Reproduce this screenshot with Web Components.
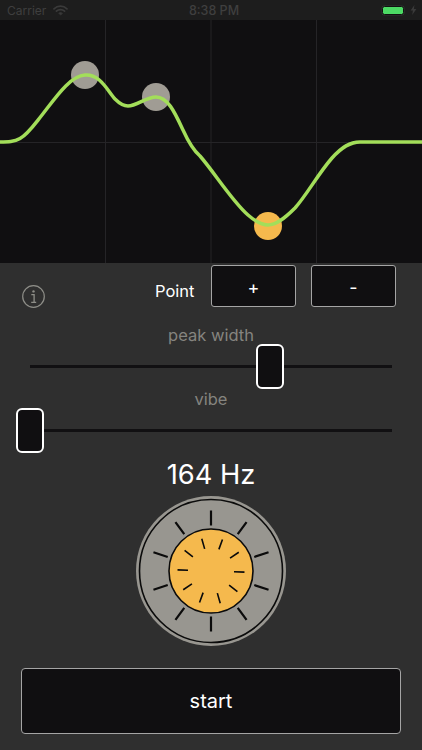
<!DOCTYPE html>
<html lang="en">
<head>
<meta charset="utf-8">
<title>Tone generator</title>
<style>
  html, body { margin: 0; padding: 0; background: #2f2f2f; }
  body { width: 422px; height: 750px; overflow: hidden; font-family: Inter, "Liberation Sans", sans-serif; }
</style>
</head>
<body>
<status-bar carrier="Carrier" time="8:38 PM"></status-bar>
<curve-graph></curve-graph>
<control-panel>
  <action-row label="Point"></action-row>
  <labeled-slider label="peak width" pos="226"></labeled-slider>
  <labeled-slider label="vibe" pos="-14.5"></labeled-slider>
  <freq-readout>164 Hz</freq-readout>
  <dial-knob></dial-knob>
  <start-button>start</start-button>
</control-panel>

<script>
// ─── STATUS BAR ───
class StatusBar extends HTMLElement {
  connectedCallback() {
    const root = this.attachShadow({ mode: 'open' });
    root.innerHTML = `
      <style>
        :host { display: flex; align-items: center; height: 20px; background: #1d1d1d; color: #3f3f3f;
                font: 400 12px Inter, "Liberation Sans", sans-serif; position: relative; }
        .left { display: flex; align-items: center; gap: 7px; padding-left: 7px; flex: 1; }
        .time { flex: 1; text-align: center; padding-left: 4px; font-size: 12.5px; font-weight: 500; white-space: nowrap; }
        .right { flex: 1; display: flex; align-items: center; justify-content: flex-end; gap: 6px; padding-right: 5px; }
        .batt { width: 22px; height: 9px; border-radius: 2.5px; background: #4cd964; border: 1px solid #111; box-sizing: border-box; box-shadow: 0 0 0 .5px #333; }
      </style>
      <div class="left"><span>${this.getAttribute('carrier')}</span>
        <svg width="15" height="11" viewBox="0 0 15 11" fill="none" stroke="#3a3a3a" stroke-linecap="round">
          <path d="M1 3.8C4.7.3 10.3.3 14 3.8" stroke-width="1.7"/>
          <path d="M3.4 6.2c2.3-2.1 5.9-2.1 8.2 0" stroke-width="1.7"/>
          <path d="M7.5 10 5.7 8.2c1-.9 2.6-.9 3.6 0z" fill="#3a3a3a" stroke-width=".6"/>
        </svg></div>
      <div class="time">${this.getAttribute('time')}</div>
      <div class="right"><div class="batt"></div>
        <svg width="7" height="10" viewBox="0 0 7 10"><path d="M4.4 0 .6 5.6h2.3L2.2 10 6.4 4.1H3.9z" fill="#3a3a3a"/></svg></div>`;
  }
}
customElements.define('status-bar', StatusBar);

// ─── CURVE GRAPH ───
class CurveGraph extends HTMLElement {
  connectedCallback() {
    const root = this.attachShadow({ mode: 'open' });
    root.innerHTML = `
      <style>
        :host { display: block; height: 243px; background: #100f11; }
        svg { display: block; }
      </style>
      <svg width="422" height="243" viewBox="0 20 422 243">
        <g stroke="#252427" stroke-width="1">
          <path d="M105.5 20V263M211 20V263M316.5 20V263M0 142.5H422"/>
        </g>
        <circle cx="85" cy="75" r="14" fill="#a09c94"/>
        <circle cx="156" cy="97" r="14" fill="#a09c94"/>
        <circle cx="268" cy="226" r="14" fill="#f5b94d"/>
        <path fill="none" stroke="#a3de5a" stroke-width="3.5"
          d="M0 142C8 142 14 142 20 138.5C28 134 34 125 42 115C56 97 70 76 85 75
             C100 74 107 90 115 99C120 104 124 106 128 106C137 106 146 97 156 97
             C168 97 175 113 183 130C188 141 193 150 200 156C214 172 232 201 248 215
             C256 222 262 225 268 225C276 225 284 219 295 208C306 196 318 174 332 158
             C342 147 350 142 360 142H422"/>
      </svg>`;
  }
}
customElements.define('curve-graph', CurveGraph);

// ─── PANEL ───
class ControlPanel extends HTMLElement {
  constructor() {
    super();
    this.attachShadow({ mode: 'open' }).innerHTML = `
      <style>
        :host { display: flex; flex-direction: column; height: 487px; background: #2f2f2f; padding-top: 2px; box-sizing: border-box; }
      </style>
      <slot></slot>`;
  }
}
customElements.define('control-panel', ControlPanel);

// ─── POINT + / - ROW ───
class ActionRow extends HTMLElement {
  connectedCallback() {
    const root = this.attachShadow({ mode: 'open' });
    root.innerHTML = `
      <style>
        :host { display: flex; align-items: flex-start; height: 60px; padding: 0 26px 0 22px; color: #fff; }
        .info { margin-top: 20px; margin-right: 110px; display: block; }
        .label { font-size: 16.5px; line-height: 20px; margin-top: 16px; width: 56px; white-space: nowrap; }
        button { width: 85px; height: 42px; box-sizing: border-box; background: #100f11; color: #fff;
                 border: 1px solid #a5a5a5; border-radius: 3px; font: 400 18px Inter, "Liberation Sans", sans-serif; padding: 2px 0 0; }
        button + button { margin-left: 15px; }
      </style>
      <svg class="info" width="23" height="23" viewBox="0 0 23 23" fill="none" stroke="#8e8e88">
        <circle cx="11.5" cy="11.5" r="10.8" stroke-width="1.2"/>
        <circle cx="11.5" cy="6.4" r="1.2" fill="#8e8e88" stroke="none"/>
        <path d="M9.3 9.7h2.8v7.6M9.2 17.4h5" stroke-width="1.3"/>
      </svg>
      <span class="label">${this.getAttribute('label')}</span>
      <button>+</button><button>-</button>`;
  }
}
customElements.define('action-row', ActionRow);

// ─── SLIDER ───
class LabeledSlider extends HTMLElement {
  connectedCallback() {
    const root = this.attachShadow({ mode: 'open' });
    root.innerHTML = `
      <style>
        :host { display: block; height: 64px; }
        .label { height: 22px; line-height: 20px; text-align: center; color: #85847f; font-size: 16.5px; }
        .zone { position: relative; height: 45px; margin: -3px 30px 0 30px; display: flex; align-items: center; }
        .track { flex: 1; height: 3px; background: #111012; }
        .thumb { position: absolute; top: 0; left: ${this.getAttribute('pos')}px; width: 28px; height: 45px; box-sizing: border-box;
                 background: #100f11; border: 2.5px solid #fff; border-radius: 6px; }
      </style>
      <div class="label">${this.getAttribute('label')}</div>
      <div class="zone"><div class="track"></div><div class="thumb"></div></div>`;
  }
}
customElements.define('labeled-slider', LabeledSlider);

// ─── FREQUENCY READOUT ───
class FreqReadout extends HTMLElement {
  constructor() {
    super();
    this.attachShadow({ mode: 'open' }).innerHTML = `
      <style>
        :host { display: block; height: 43px; padding-top: 5px; box-sizing: border-box; line-height: 34px; text-align: center; color: #fff; font-size: 27.3px; }
      </style>
      <slot></slot>`;
  }
}
customElements.define('freq-readout', FreqReadout);

// ─── DIAL ───
class DialKnob extends HTMLElement {
  connectedCallback() {
    const ticks = (n, start, r1, r2) => {
      let d = '';
      for (let i = 0; i < n; i++) {
        const a = (start + i * 360 / n) * Math.PI / 180;
        const p = r => `${(75 + Math.sin(a) * r).toFixed(2)} ${(75 - Math.cos(a) * r).toFixed(2)}`;
        d += `M${p(r1)}L${p(r2)}`;
      }
      return d;
    };
    const root = this.attachShadow({ mode: 'open' });
    root.innerHTML = `
      <style>
        :host { display: flex; justify-content: center; height: 172px; }
        svg { display: block; }
      </style>
      <svg width="150" height="150" viewBox="0 0 150 150">
        <circle cx="75" cy="75" r="75" fill="#989690"/>
        <circle cx="75" cy="75" r="71.5" fill="#989690" stroke="#0b0b0b" stroke-width="1.6"/>
        <path d="${ticks(10, 0, 45.5, 60.5)}" stroke="#0b0b0b" stroke-width="2.2" fill="none"/>
        <circle cx="75" cy="75" r="42" fill="#f5b94d" stroke="#0b0b0b" stroke-width="1.6"/>
        <path d="${ticks(10, -16, 23, 33.5)}" stroke="#0b0b0b" stroke-width="1.6" fill="none"/>
      </svg>`;
  }
}
customElements.define('dial-knob', DialKnob);

// ─── START BUTTON ───
class StartButton extends HTMLElement {
  constructor() {
    super();
    this.attachShadow({ mode: 'open' }).innerHTML = `
      <style>
        :host { display: block; padding: 0 21px; }
        button { display: block; width: 100%; height: 66px; box-sizing: border-box; background: #100f11; color: #fff;
                 border: 1px solid #a5a5a5; border-radius: 4px; font: 400 20px Inter, "Liberation Sans", sans-serif; }
      </style>
      <button><slot></slot></button>`;
  }
}
customElements.define('start-button', StartButton);
</script>
</body>
</html>
